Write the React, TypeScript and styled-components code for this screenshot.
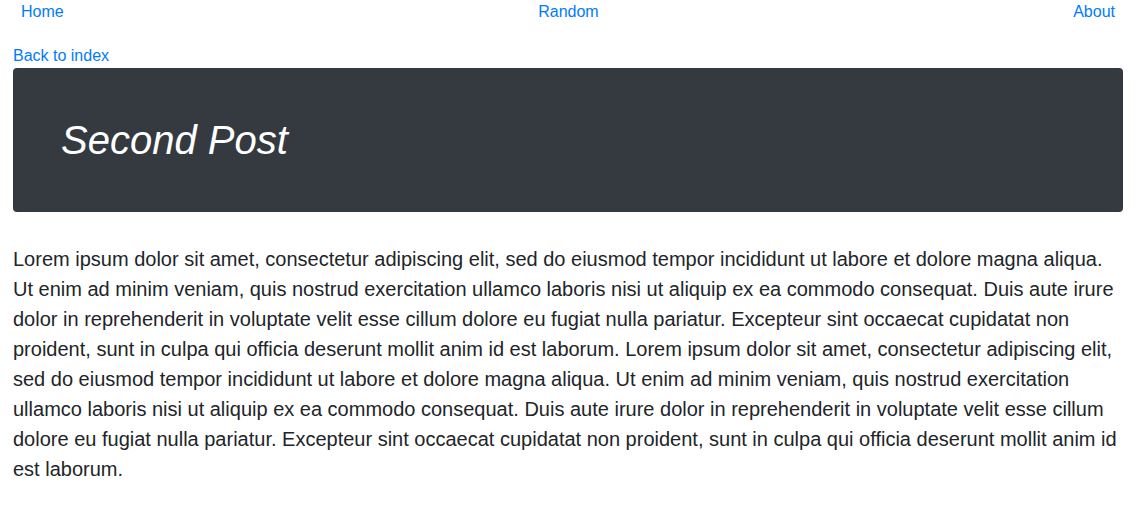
import React from "react";
import styled, { createGlobalStyle } from "styled-components";

const GlobalStyle = createGlobalStyle`
  html, body {
    margin: 0;
    padding: 0;
    background: #ffffff;
  }
  body {
    font-family: "Liberation Sans", Arial, Helvetica, sans-serif;
    font-size: 16px;
    line-height: 24px;
    color: #212529;
  }
`;

const Nav = styled.nav`
  display: flex;
  justify-content: space-between;
  align-items: center;
  padding: 0 21px;
  height: 24px;
`;

const NavLink = styled.a`
  color: #007bff;
  text-decoration: none;
  font-size: 16px;
  line-height: 24px;
`;

const Container = styled.main`
  padding: 20px 13px 0;
`;

const BackLink = styled.a`
  display: inline-block;
  color: #007bff;
  text-decoration: none;
  font-size: 16px;
  line-height: 24px;
`;

const Jumbotron = styled.header`
  background: #343a40;
  border-radius: 4px;
  padding: 48px;
  margin-bottom: 32px;
`;

const Title = styled.h1`
  margin: 0;
  color: #ffffff;
  font-style: italic;
  font-weight: 400;
  font-size: 40px;
  line-height: 48px;
`;

const Lead = styled.p`
  margin: 0;
  font-size: 20px;
  line-height: 30px;
  font-weight: 300;
  color: #212529;
`;

const text =
  "Lorem ipsum dolor sit amet, consectetur adipiscing elit, sed do eiusmod tempor incididunt ut labore et dolore magna aliqua. Ut enim ad minim veniam, quis nostrud exercitation ullamco laboris nisi ut aliquip ex ea commodo consequat. Duis aute irure dolor in reprehenderit in voluptate velit esse cillum dolore eu fugiat nulla pariatur. Excepteur sint occaecat cupidatat non proident, sunt in culpa qui officia deserunt mollit anim id est laborum. Lorem ipsum dolor sit amet, consectetur adipiscing elit, sed do eiusmod tempor incididunt ut labore et dolore magna aliqua. Ut enim ad minim veniam, quis nostrud exercitation ullamco laboris nisi ut aliquip ex ea commodo consequat. Duis aute irure dolor in reprehenderit in voluptate velit esse cillum dolore eu fugiat nulla pariatur. Excepteur sint occaecat cupidatat non proident, sunt in culpa qui officia deserunt mollit anim id est laborum.";

export default function App() {
  return (
    <>
      <GlobalStyle />
      <Nav>
        <NavLink href="#">Home</NavLink>
        <NavLink href="#">Random</NavLink>
        <NavLink href="#">About</NavLink>
      </Nav>
      <Container>
        <BackLink href="#">Back to index</BackLink>
        <Jumbotron>
          <Title>Second Post</Title>
        </Jumbotron>
        <Lead>{text}</Lead>
      </Container>
    </>
  );
}
